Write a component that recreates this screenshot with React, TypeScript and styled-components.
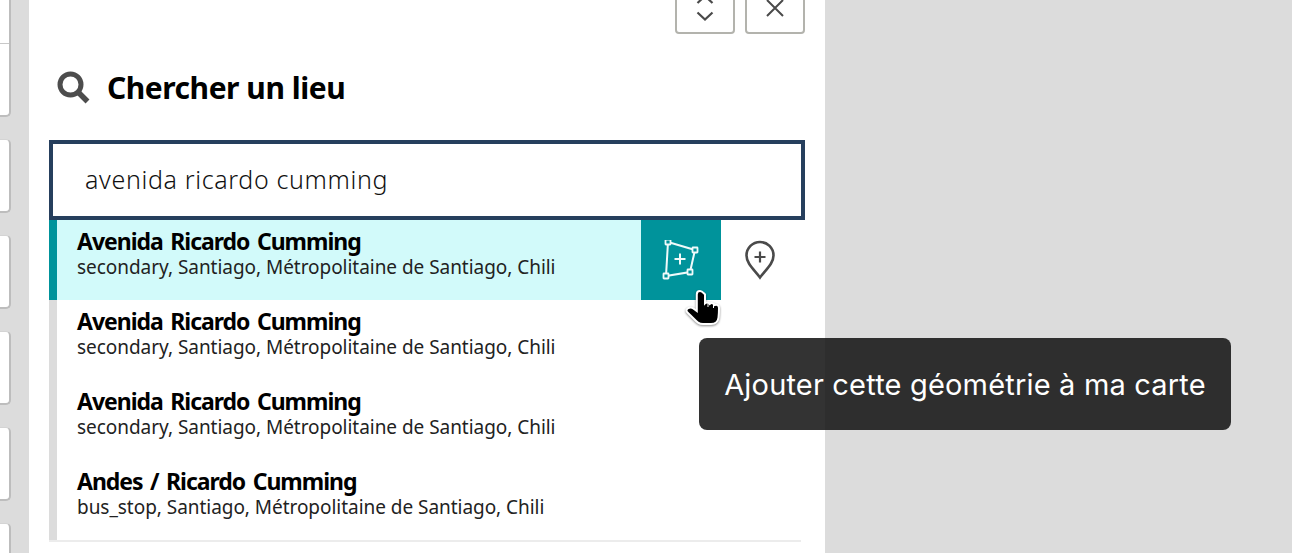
import React from "react";
import styled, { createGlobalStyle } from "styled-components";

const Global = createGlobalStyle`
  html, body { margin: 0; padding: 0; height: 100%; overflow: hidden; background: #dcdcdc; }
  #root { height: 100%; }
`;

const Page = styled.div`
  position: relative;
  display: flex;
  width: 1292px;
  height: 553px;
  overflow: hidden;
  background: #dcdcdc;
  font-family: "Noto Sans", "Open Sans", sans-serif;
`;

const Rail = styled.div`
  width: 29px;
  flex: none;
  display: flex;
  flex-direction: column;
  gap: 22px;
`;

const RailCard = styled.div<{ $first?: boolean }>`
  width: 41px;
  height: ${(p) => (p.$first ? "117px" : "74px")};
  flex: none;
  margin-left: -30px;
  box-sizing: border-box;
  background: #fff;
  border-top: ${(p) => (p.$first ? "none" : "1px solid #d4d4d4")};
  border-right: 2px solid #bdbdbd;
  border-bottom: 2px solid #bdbdbd;
  border-radius: ${(p) => (p.$first ? "0 0 5px 5px" : "5px")};
`;

const RailDivider = styled.div`
  margin-top: 43px;
  height: 1px;
  background: #c8c8c8;
`;

const Panel = styled.div`
  width: 796px;
  flex: none;
  background: #fff;
  box-sizing: border-box;
  padding: 0 20px;
`;

const TopButtons = styled.div`
  display: flex;
  justify-content: flex-end;
  gap: 10px;
  margin-top: -26px;
`;

const IconButton = styled.div`
  width: 60px;
  height: 60px;
  box-sizing: border-box;
  border: 2px solid #b3b3ad;
  border-radius: 4px;
  background: #fff;
  display: flex;
  align-items: flex-end;
  justify-content: center;
  padding-bottom: 10px;
`;

const ButtonGlyph = styled.svg`
  overflow: visible;
`;

const Heading = styled.h2`
  display: flex;
  align-items: center;
  gap: 17px;
  margin: 33px 0 0 8px;
  height: 40px;
  font-size: 30px;
  font-weight: 700;
  color: #000;
  letter-spacing: -0.47px;
`;

const SearchBox = styled.div`
  margin-top: 33px;
  height: 80px;
  box-sizing: border-box;
  border: 4px solid #263f5d;
  padding: 0 32px 2px;
  display: flex;
  align-items: center;
  font-size: 25px;
  font-weight: 300;
  letter-spacing: 0.65px;
  color: #111;
`;

const Results = styled.div`
  border-bottom: 2px solid #ececec;
  width: 752px;
`;

const Row = styled.div<{ $active?: boolean }>`
  display: flex;
  height: 80px;
  width: 672px;
  box-sizing: border-box;
  border-left: 8px solid ${(p) => (p.$active ? "#00939b" : "#dcdcdc")};
  background: ${(p) => (p.$active ? "#d2fafa" : "#fff")};
  position: relative;
`;

const RowText = styled.div`
  flex: 1;
  padding: 8px 0 0 20px;
`;

const RowTitle = styled.div`
  font-size: 23px;
  line-height: 26px;
  font-weight: 700;
  color: #000;
  letter-spacing: -1.02px;
  word-spacing: 2.5px;
  white-space: nowrap;
`;

const RowSub = styled.div`
  font-size: 19px;
  line-height: 26px;
  font-weight: 400;
  color: #222;
  letter-spacing: -0.04px;
  white-space: nowrap;
`;

const AddGeometry = styled.div`
  width: 80px;
  height: 80px;
  flex: none;
  background: #00939b;
  display: flex;
  align-items: center;
  justify-content: center;
`;

const AddPin = styled.div`
  position: absolute;
  left: 663px;
  top: 0;
  width: 80px;
  height: 80px;
  display: flex;
  align-items: center;
  justify-content: center;
`;

const Tooltip = styled.div`
  position: absolute;
  left: 699px;
  top: 338px;
  width: 532px;
  height: 92px;
  padding-top: 1px;
  box-sizing: border-box;
  border-radius: 8px;
  background: rgba(17, 17, 17, 0.86);
  color: #fff;
  font-family: Inter, sans-serif;
  font-size: 29px;
  letter-spacing: 0.18px;
  font-weight: 400;
  display: flex;
  align-items: center;
  justify-content: center;
  white-space: nowrap;
`;

const Cursor = styled.svg`
  position: absolute;
  left: 684px;
  top: 288px;
  filter: drop-shadow(0 1px 1px rgba(0, 0, 0, 0.45));
`;

const results = [
  { title: "Avenida Ricardo Cumming", sub: "secondary, Santiago, Métropolitaine de Santiago, Chili" },
  { title: "Avenida Ricardo Cumming", sub: "secondary, Santiago, Métropolitaine de Santiago, Chili" },
  { title: "Avenida Ricardo Cumming", sub: "secondary, Santiago, Métropolitaine de Santiago, Chili" },
  { title: "Andes / Ricardo Cumming", sub: "bus_stop, Santiago, Métropolitaine de Santiago, Chili" },
];

export default function App() {
  return (
    <Page>
      <Global />
      <Rail>
        <RailCard $first>
          <RailDivider />
        </RailCard>
        {Array.from({ length: 5 }, (_, i) => (
          <RailCard key={i} />
        ))}
      </Rail>
      <Panel>
        <TopButtons>
          <IconButton>
            <ButtonGlyph width="20" height="22" viewBox="0 0 20 22" fill="none" stroke="#4a4a4a" strokeWidth="2.2">
              <path d="M2.500 3l7.500-7 7.500 7M2.500 12.500l7.500 7 7.500-7" />
            </ButtonGlyph>
          </IconButton>
          <IconButton>
            <ButtonGlyph width="20" height="22" viewBox="0 0 20 22" fill="none" stroke="#4a4a4a" strokeWidth="2">
              <path d="M2 0l16 16M18 0L2 16" />
            </ButtonGlyph>
          </IconButton>
        </TopButtons>
        <Heading>
          <svg width="33" height="33" viewBox="0 0 33 33" fill="none" stroke="#4d4d4d">
            <circle cx="13.500" cy="13.500" r="10.500" strokeWidth="5" />
            <path d="M21 21l9.500 9.500" strokeWidth="5.500" />
          </svg>
          Chercher un lieu
        </Heading>
        <SearchBox>avenida ricardo cumming</SearchBox>
        <Results>
          {results.map((r, i) => (
            <Row key={i} $active={i === 0}>
              <RowText>
                <RowTitle>{r.title}</RowTitle>
                <RowSub>{r.sub}</RowSub>
              </RowText>
              {i === 0 && (
                <>
                  <AddGeometry>
                    <svg width="38" height="40" viewBox="0 0 38 40" fill="none" stroke="#f0fafa" strokeWidth="2">
                      <path d="M6 2l27 8-5 22-24 4z" />
                      <path d="M12.500 19h11M18 13.500v11" />
                      <g fill="#00939b" strokeWidth="1.800">
                        <rect x="3.500" y="-0.500" width="5" height="5" rx="0.5" />
                        <rect x="30.500" y="7.500" width="5" height="5" rx="0.5" />
                        <rect x="25.500" y="29.500" width="5" height="5" rx="0.5" />
                        <rect x="1.500" y="33.500" width="5" height="5" rx="0.5" />
                      </g>
                    </svg>
                  </AddGeometry>
                  <AddPin>
                    <svg width="32" height="40" viewBox="0 0 32 40" fill="none" stroke="#4a4a4a" strokeWidth="2.600">
                      <path d="M16 37.500C10 29.500 2.500 23.500 2.500 15.500a13.500 13.500 0 0 1 27 0c0 8-7.500 14-13.500 22z" />
                      <path d="M10.500 17h11M16 11.500v11" strokeWidth="2.200" />
                    </svg>
                  </AddPin>
                </>
              )}
            </Row>
          ))}
        </Results>
      </Panel>
      <Cursor width="38" height="40" viewBox="0 0 38 40">
        <path
          d="M16 3c-2 0-3.200 1.400-3.200 3.400V23l-3.500-2.600c-2.500-1.600-6-.6-6.800 1.600-.4 1.400.6 2.400 2 3.600 3.500 3 6.500 7 9.500 9 1.500 1 3 1.400 5 1.400h8c4 0 7-2.500 7.500-6.500.3-2.500.5-6 .5-9.500 0-2.500-2.200-4-4.300-3-1-2-3.500-2.500-5-1-1.200-1.800-3.400-2-4.700-.7V6.400C19 4.400 18 3 16 3z"
          fill="#000"
          stroke="#fff"
          strokeWidth="2"
        />
        <path d="M24 15v4M29.500 16v4" stroke="#fff" strokeWidth="1" />
      </Cursor>
      <Tooltip>Ajouter cette géométrie à ma carte</Tooltip>
    </Page>
  );
}
